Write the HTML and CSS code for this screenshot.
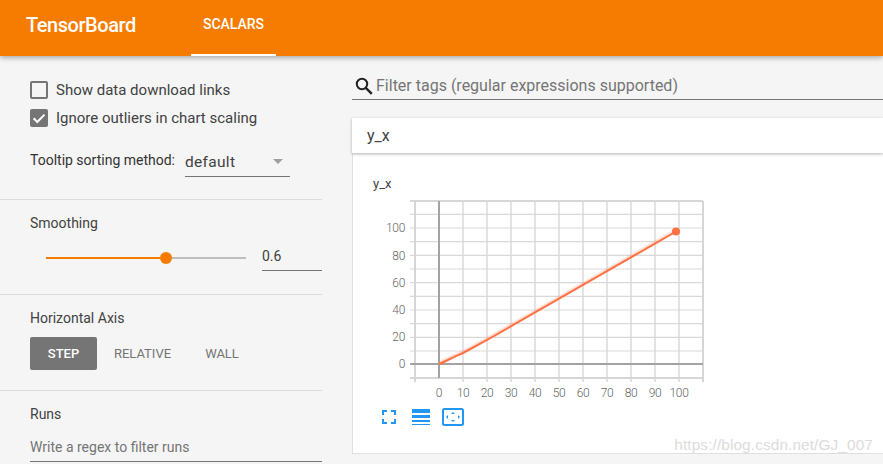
FILE: index.html
```html
<!DOCTYPE html>
<html lang="en">
<head>
<meta charset="utf-8">
<title>TensorBoard</title>
<link rel="stylesheet" href="styles.css">
</head>
<body>
<header class="topbar">
  <div class="brand">TensorBoard</div>
  <nav class="tabs"><div class="tab">SCALARS</div></nav>
</header>
<div class="layout">
  <aside class="sidebar">
    <section class="sec sec-options">
      <label class="check"><span class="box"></span>Show data download links</label>
      <label class="check"><span class="box checked"><svg viewBox="0 0 18 18" width="18" height="18"><path d="M3.6 9.3l3.7 3.7 7.2-7.4" fill="none" stroke="#fff" stroke-width="2"/></svg></span>Ignore outliers in chart scaling</label>
      <div class="sort">
        <span class="sort-label">Tooltip sorting method:</span>
        <div class="select"><span>default</span><span class="caret"></span></div>
      </div>
    </section>
    <section class="sec sec-smooth">
      <div class="title">Smoothing</div>
      <div class="slider-row">
        <div class="slider"><div class="fill"></div><div class="knob"></div><div class="rest"></div></div>
        <div class="num">0.6</div>
      </div>
    </section>
    <section class="sec sec-axis">
      <div class="title">Horizontal Axis</div>
      <div class="btns">
        <div class="btn active">STEP</div>
        <div class="btn b-rel">RELATIVE</div>
        <div class="btn b-wall">WALL</div>
      </div>
    </section>
    <section class="sec sec-runs">
      <div class="title">Runs</div>
      <div class="regex">Write a regex to filter runs</div>
    </section>
  </aside>
  <main class="main">
    <div class="filter">
      <svg class="search" viewBox="0 0 18 18" width="18" height="18"><circle cx="7" cy="7" r="5.2" fill="none" stroke="#222" stroke-width="2"/><path d="M10.8 10.8l6 6" stroke="#222" stroke-width="2.4" fill="none"/></svg>
      <span>Filter tags (regular expressions supported)</span>
    </div>
    <div class="card-head">y_x</div>
    <div class="card">
      <div class="chart-title">y_x</div>
      <svg class="chart" viewBox="0 0 340 216" width="340" height="216">
        <path class="grid-v" d="M87 1V182M111 1V182M135 1V182M159 1V182M183 1V182M207 1V182M231 1V182M255 1V182M279 1V182M303 1V182"/>
        <path class="grid-h" d="M34 14.3H327M34 28H327M34 41.7H327M34 55.3H327M34 69H327M34 82.7H327M34 96.3H327M34 110H327M34 123.7H327M34 137.3H327M34 151H327"/>
        <path class="edge" d="M34 1H327M34 178H327M39 1V182M327 1V182"/>
        <path class="axis" d="M63 1V178M34 164H327"/>
        <path class="halo" d="M63 164C71 161 79 156 87 153L111 140L300 31.5"/>
        <path class="line" d="M63 164C71 161 79 156 87 153L111 140L300 31.5"/>
        <circle class="dot" cx="300" cy="31.5" r="4"/>
        <g class="ylabels">
          <text x="29" y="32">100</text><text x="29" y="59.5">80</text><text x="29" y="87">60</text><text x="29" y="114">40</text><text x="29" y="141">20</text><text x="29" y="168">0</text>
        </g>
        <g class="xlabels">
          <text x="63" y="197">0</text><text x="87" y="197">10</text><text x="111" y="197">20</text><text x="135" y="197">30</text><text x="159" y="197">40</text><text x="183" y="197">50</text><text x="207" y="197">60</text><text x="231" y="197">70</text><text x="255" y="197">80</text><text x="279" y="197">90</text><text x="303" y="197">100</text>
        </g>
      </svg>
      <div class="tools">
        <svg class="t1" viewBox="0 0 14 14" width="14" height="14"><path d="M1 5V1H5M9 1H13V5M13 9V13H9M5 13H1V9" fill="none" stroke="#2196f3" stroke-width="2"/></svg>
        <svg class="t2" viewBox="0 0 18 16" width="18" height="16"><path d="M0 0H18V4H0zM0 6H18V9H0zM0 11H18V13H0zM0 15H18V16H0z" fill="#2196f3"/></svg>
        <svg class="t3" viewBox="0 0 22 18" width="22" height="18"><rect x="1" y="1" width="20" height="16" rx="1.5" fill="none" stroke="#2196f3" stroke-width="2"/><path d="M11 4l-2 2h4zM11 14l-2-2h4zM4 9l2-2v4zM18 9l-2-2v4z" fill="#2196f3"/></svg>
      </div>
    </div>
  </main>
</div>
<div class="watermark">https://blog.csdn.net/GJ_007</div>
</body>
</html>
```
FILE: styles.css
```css
* { box-sizing: border-box; }
html, body { margin: 0; height: 100%; }
body {
  width: 883px; height: 464px; overflow: hidden; position: relative;
  background: #f5f5f5; color: #424242;
  font-family: Roboto, "Liberation Sans", sans-serif;
}
.topbar {
  height: 56px; background: #f57c00; color: #fff;
  display: flex; box-shadow: 0 2px 5px rgba(0,0,0,.3);
  position: relative;
}
.brand { width: 191px; padding: 13px 0 0 26px; font-size: 20px; font-weight: 500; line-height: 24px; letter-spacing: -0.45px; }
.tabs { display: flex; }
.tab {
  width: 85px; height: 56px; text-align: center; padding-top: 16px;
  font-size: 14px; line-height: 17px; font-weight: 500;
  border-bottom: 2px solid #fff;
}
.layout { display: flex; height: 408px; }
.sidebar { width: 322px; margin-right: 30px; flex: none; }
.sec { padding-left: 30px; border-bottom: 1px solid #dcdcdc; }
.sec:last-child { border-bottom: 0; }
.sec-options { height: 144px; padding-top: 25px; }
.check { display: flex; align-items: center; height: 18px; margin-bottom: 10px; font-size: 15px; }
.box { width: 18px; height: 18px; border: 2px solid #757575; border-radius: 2px; margin-right: 8px; flex: none; }
.box.checked { background: #757575; border: 0; }
.box svg { display: block; }
.sort { display: flex; margin-top: 22px; font-size: 14px; line-height: 20px; }
.sort-label { padding-top: 1px; width: 155px; flex: none; color: #333; }
.select {
  width: 105px; height: 29px; border-bottom: 1px solid #757575;
  display: flex; justify-content: space-between; align-items: flex-start;
  font-size: 15.5px; letter-spacing: .3px; line-height: 20px; padding-top: 4px; margin-top: -1px;
}
.caret { width: 0; height: 0; border: 5px solid transparent; border-top: 5px solid #9e9e9e; border-bottom: 0; margin: 7px 7px 0 0; }
.title { font-size: 14px; line-height: 18px; }
.sec-smooth { height: 95px; padding-top: 14px; }
.slider-row { display: flex; padding-top: 19px; }
.slider { width: 200px; margin-left: 16px; height: 12px; display: flex; align-items: center; margin-top: 1px; }
.fill { width: 114px; height: 2px; background: #f57c00; }
.knob { width: 12px; height: 12px; border-radius: 50%; background: #f57c00; flex: none; }
.rest { flex: 1; height: 2px; background: #bdbdbd; }
.num { width: 60px; margin-left: 16px; height: 28px; margin-top: -8px; padding-top: 4px; border-bottom: 1px solid #757575; font-size: 14px; line-height: 18px; }
.sec-axis { height: 96px; padding-top: 14px; }
.btns { display: flex; margin-top: 10px; font-size: 13px; color: #757575; }
.btn { height: 33px; line-height: 33px; text-align: center; }
.btn.active { width: 67px; background: #757575; color: #fff; border-radius: 2px; font-weight: 500; }
.b-rel { width: 91px; }
.b-wall { width: 34px; margin-left: 17px; }
.sec-runs { padding-top: 14px; }
.regex { margin-top: 15px; height: 24px; font-size: 14px; line-height: 18px; color: #757575; border-bottom: 1px solid #757575; }
.main { flex: 1; min-width: 0; }
.filter {
  height: 28px; margin-top: 16px; display: flex; align-items: center;
  border-bottom: 1px solid #757575; font-size: 16px; color: #757575;
  padding-left: 3px;
}
.filter span { margin-left: 3px; }
.search { flex: none; margin-top: 1px; }
.card-head {
  height: 35px; margin-top: 18px; background: #fff; padding-left: 15px;
  font-size: 16px; line-height: 35px; color: #424242;
  box-shadow: 0 1px 3px rgba(0,0,0,.3); position: relative;
}
.card {
  height: 301px; background: #fff; border-left: 1px solid #e0e0e0; border-bottom: 1px solid #e0e0e0;
  padding: 23px 0 0 20px;
}
.chart-title { font-size: 13px; line-height: 16px; color: #424242; height: 24px; }
.chart { display: block; overflow: visible; margin-left: 3px; }
.grid-v { stroke: #e3e3e3; stroke-width: 2; fill: none; }
.grid-h { stroke: #d9d9d9; stroke-width: 1.2; fill: none; }
.edge { stroke: #d6d6d6; stroke-width: 2; fill: none; }
.axis { stroke: #a3a3a3; stroke-width: 2; fill: none; }
.line { stroke: #ff7043; stroke-width: 2; fill: none; }
.halo { stroke: #ff7043; stroke-opacity: .2; stroke-width: 4; fill: none; transform: translateY(-1px); }
.dot { fill: #ff7043; }
.ylabels text, .xlabels text { font-size: 12px; fill: #666; font-family: Roboto, sans-serif; font-weight: 300; letter-spacing: -.3px; }
.ylabels text { text-anchor: end; }
.xlabels text { text-anchor: middle; }
.tools { display: flex; align-items: center; margin-left: 9px; height: 18px; margin-top: -8px; }
.tools svg { display: block; flex: none; }
.t2 { margin-left: 16px; }
.t3 { margin-left: 12px; }
.watermark {
  position: absolute; right: 10px; top: 436px;
  font-size: 15.4px; letter-spacing: .1px; color: #dcdcdc;
  font-family: "Liberation Sans", sans-serif;
}
```
